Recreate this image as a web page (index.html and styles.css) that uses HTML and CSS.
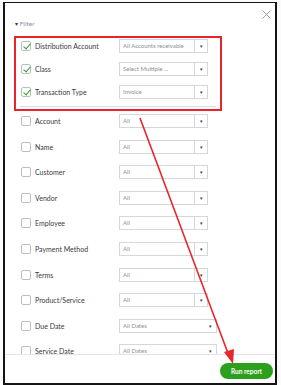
FILE: index.html
```html
<!DOCTYPE html>
<html lang="en">

<head>
    <meta charset="UTF-8">
    <meta name="viewport" content="width=device-width, initial-scale=1.0">
    <title>Filter</title>
    <link rel="stylesheet" href="styles.css">
</head>

<body>
    <div class="page">
        <div class="modal">
            <div class="modal-body">
                <div class="close">
                    <svg width="9" height="9" viewBox="0 0 9 9"><path d="M0.5 0.5L8.5 8.5M8.5 0.5L0.5 8.5" stroke="#8d9096" stroke-width="0.9"/></svg>
                </div>
                <div class="filter-title"><span class="caret">&#9662;</span> Filter</div>

                <div class="highlight">
                    <div class="row top">
                        <span class="check on"></span>
                        <span class="label">Distribution Account</span>
                        <div class="select"><span>All Accounts receivable</span><i class="arrow">&#9662;</i></div>
                    </div>
                    <div class="row top">
                        <span class="check on"></span>
                        <span class="label">Class</span>
                        <div class="select"><span>Select Multiple ...</span><i class="arrow">&#9662;</i></div>
                    </div>
                    <div class="row top">
                        <span class="check on"></span>
                        <span class="label">Transaction Type</span>
                        <div class="select"><span>Invoice</span><i class="arrow">&#9662;</i></div>
                    </div>
                    <div class="divider"></div>
                </div>

                <div class="rows">
                    <div class="row"><span class="check"></span><span class="label">Account</span><div class="select"><span>All</span><i class="arrow">&#9662;</i></div></div>
                    <div class="row"><span class="check"></span><span class="label">Name</span><div class="select"><span>All</span><i class="arrow">&#9662;</i></div></div>
                    <div class="row"><span class="check"></span><span class="label">Customer</span><div class="select"><span>All</span><i class="arrow">&#9662;</i></div></div>
                    <div class="row"><span class="check"></span><span class="label">Vendor</span><div class="select"><span>All</span><i class="arrow">&#9662;</i></div></div>
                    <div class="row"><span class="check"></span><span class="label">Employee</span><div class="select"><span>All</span><i class="arrow">&#9662;</i></div></div>
                    <div class="row"><span class="check"></span><span class="label">Payment Method</span><div class="select"><span>All</span><i class="arrow">&#9662;</i></div></div>
                    <div class="row"><span class="check"></span><span class="label">Terms</span><div class="select"><span>All</span><i class="arrow">&#9662;</i></div></div>
                    <div class="row"><span class="check"></span><span class="label">Product/Service</span><div class="select"><span>All</span><i class="arrow">&#9662;</i></div></div>
                    <div class="row"><span class="check"></span><span class="label">Due Date</span><div class="select wide"><span>All Dates</span><i class="arrow">&#9662;</i></div></div>
                    <div class="row"><span class="check"></span><span class="label">Service Date</span><div class="select wide"><span>All Dates</span><i class="arrow">&#9662;</i></div></div>
                </div>
            </div>
            <div class="modal-footer">
                <button class="run">Run report</button>
            </div>
        </div>

        <!-- annotation arrow drawn over the dialog -->
        <svg class="pointer" width="281" height="385" viewBox="0 0 281 385">
            <line x1="140" y1="118" x2="229" y2="356" stroke="#e8252a" stroke-width="1.6"/>
            <path d="M224 352L233 364L234 349Z" fill="#e8252a"/>
        </svg>
    </div>
</body>
</html>
```

FILE: styles.css
```css
html,
body {
    margin: 0;
    padding: 0;
    background: #fff;
}

body {
    font-family: "Lato", "Open Sans", sans-serif;
    color: #393a3d;
}

.page {
    position: relative;
    width: 281px;
    height: 385px;
    padding: 2px 4px 3px 3px;
    box-sizing: border-box;
    background: #fbfbfb;
}

.modal {
    height: 380px;
    border: 2px solid #141414;
    border-top-width: 1px;
    background: #fff;
    display: flex;
    flex-direction: column;
    overflow: hidden;
}

.modal-body {
    position: relative;
    flex: none;
    height: 351px;
    box-sizing: border-box;
    overflow: hidden;
    padding: 16px 0 0 9px;
}

.close {
    position: absolute;
    top: 7px;
    right: 4px;
    line-height: 0;
}

.filter-title {
    font-size: 6.5px;
    color: #8d9096;
    height: 9px;
    line-height: 9px;
    padding-left: 1px;
}

.caret {
    color: #393a3d;
    font-size: 6px;
}

.highlight {
    width: 208px;
    margin-top: 8px;
    border: 2px solid #e8252a;
    box-sizing: border-box;
    display: flex;
    flex-direction: column;
    gap: 8px;
}

.row {
    display: flex;
    align-items: center;
    height: 15px;
    flex: none;
    padding-left: 7px;
}

.row.top {
    padding-left: 5px;
}

.divider {
    height: 1px;
    background: #dcdee2;
    margin: -1px 4px 2px 4px;
}

.rows {
    display: flex;
    flex-direction: column;
    gap: 10.6px;
    padding-top: 2.5px;
}

.check {
    width: 10px;
    height: 10px;
    border: 1px solid #babec5;
    border-radius: 2px;
    box-sizing: border-box;
    flex: none;
    position: relative;
}

.check.on::after {
    content: "";
    position: absolute;
    left: 2.5px;
    top: 0px;
    width: 3px;
    height: 6px;
    border: solid #2ca01c;
    border-width: 0 1.6px 1.6px 0;
    transform: rotate(40deg);
}

.label {
    font-size: 7px;
    margin-left: 4px;
    width: 84px;
    white-space: nowrap;
}

.select {
    display: flex;
    align-items: stretch;
    width: 89px;
    height: 14px;
    border: 1px solid #d4d7dc;
    box-sizing: border-box;
    font-size: 6px;
    color: #8d9096;
    background: #fff;
}

.select span {
    flex: 1;
    padding-left: 3px;
    line-height: 12px;
    white-space: nowrap;
    overflow: hidden;
}

.arrow {
    font-style: normal;
    width: 12px;
    border-left: 1px solid #d4d7dc;
    text-align: center;
    line-height: 12px;
    font-size: 5px;
    color: #393a3d;
}

.select.wide {
    width: 98px;
}

.select.wide .arrow {
    border-left: none;
}

.modal-footer {
    flex: 1;
    border-top: 1px solid #e3e5e8;
    display: flex;
    justify-content: flex-end;
    align-items: center;
    padding-right: 2px;
}

.run {
    background: #2ca01c;
    color: #fff;
    border: none;
    border-radius: 9px;
    font-family: "Lato", sans-serif;
    font-weight: 700;
    font-size: 6.5px;
    height: 16px;
    width: 53px;
    padding: 0;
    margin-top: 4px;
}

.pointer {
    position: absolute;
    left: 0;
    top: 0;
    pointer-events: none;
}
```
